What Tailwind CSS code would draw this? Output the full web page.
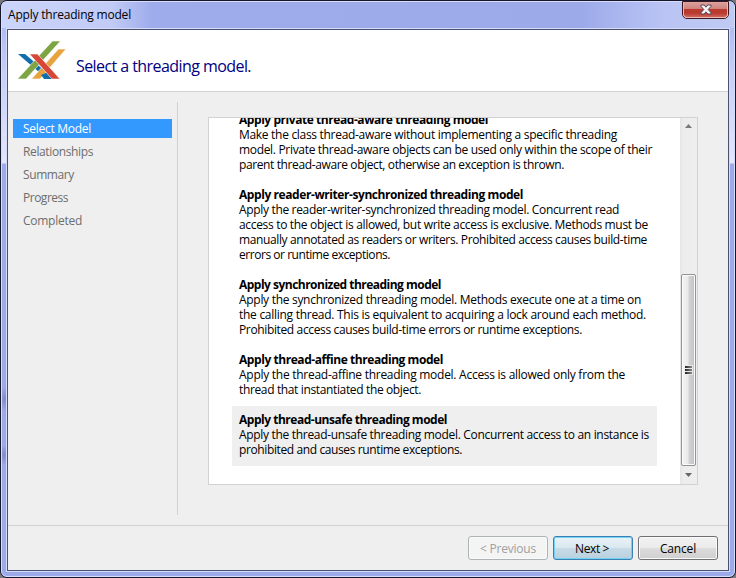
<!DOCTYPE html>
<html lang="en">
<head>
<meta charset="utf-8">
<title>Apply threading model</title>
<script src="https://cdn.jsdelivr.net/npm/@tailwindcss/browser@4"></script>
</head>
<body class="w-[736px] h-[578px] overflow-hidden bg-[#77777c] font-['Open_Sans','Noto_Sans',sans-serif] text-[12px] leading-[15px] text-black">
<div class="w-[736px] h-[578px] rounded-[7px] border border-[#15182c] bg-[#9eacea] overflow-hidden">
<div class="h-full rounded-[6px] border border-[#d8defa] flex flex-col px-[4px] pb-[4px] bg-[radial-gradient(8px_12px_at_3px_397px,#7f8aca,transparent),radial-gradient(6px_10px_at_2px_453px,#7f8aca,transparent),linear-gradient(to_bottom,#a5b2ee_0px,#c5cef7_70px,#e3e6fb_161px,#9daaea_162px,#9daaea_100%)]">
  <header class="h-[26px] shrink-0 -mx-[4px] pl-[6px] pr-[5px] flex justify-between bg-[linear-gradient(to_right,#cbd4fa_0px,#c1cbf6_110px,#9eaceb_150px,#9caaea_580px,#b9c4f4_660px,#bfcaf3_100%)]">
    <div class="pt-[5px]"><span data-w="123" class="fit inline-block whitespace-nowrap">Apply threading model</span></div>
    <div class="w-[47px] h-[18px] -mt-[1px] border border-[#3d1720] rounded-b-[5px] overflow-hidden">
      <div class="h-full border border-t-0 border-[#eab8b5] rounded-b-[4px] bg-[linear-gradient(to_bottom,#dda29f_0%,#cf807a_48%,#b93a2e_50%,#b93b30_75%,#d0655b_100%)] flex items-center justify-center">
        <svg width="12" height="11" viewBox="0 0 12 11"><path d="M1 1h3.200L6 3.200 7.800 1H11v1.300L8.200 5.500 11 8.700V10H7.800L6 7.800 4.200 10H1V8.700L3.800 5.500 1 2.300z" fill="#f6f6f6" stroke="#51495b" stroke-width="1"/></svg>
      </div>
    </div>
  </header>
  <main class="flex-1 min-h-0 border border-[#d5dcfb]">
  <div class="h-full border border-[#4b516f] bg-[#efefef] flex flex-col">
    <div class="h-[62px] shrink-0 bg-white border-b border-[#d2d2d2] flex">
      <svg class="mt-[10px] ml-[9px] shrink-0" width="50" height="40" viewBox="0 0 50 40">
        <path d="M1 14h7l29 25h-7z" fill="#126dab"/>
        <path d="M.5 39h8.500L43.500 1H35.500z" fill="#7da544" stroke="#fff" stroke-width=".6"/>
        <path d="M14.500 39h8.500L49 9h-7.500z" fill="#e7a43e" stroke="#fff" stroke-width=".6"/>
        <path d="M24 35l3 4h8l-6-6z" fill="#126dab"/>
        <path d="M12.500 14H20.500L43 39h-8z" fill="#d64737" stroke="#fff" stroke-width=".6"/>
      </svg>
      <h1 class="ml-[9px] mt-[24px] text-[16px] leading-[24px] text-[#000080]"><span data-w="175" class="fit inline-block whitespace-nowrap">Select a threading model.</span></h1>
    </div>
    <div class="flex-1 min-h-0 flex">
      <nav class="w-[170px] mt-[10px] mb-[10px] pt-[17px] border-r border-[#d2d2d2] pl-[5px] pr-[5px] text-[#6d6d6d] flex flex-col gap-[4px]">
        <div class="h-[19px] pl-[10px] pt-[2px] bg-[#3399ff] text-white"><span data-w="68" class="fit inline-block whitespace-nowrap">Select Model</span></div>
        <div class="h-[19px] pl-[10px] pt-[2px]"><span data-w="70" class="fit inline-block whitespace-nowrap">Relationships</span></div>
        <div class="h-[19px] pl-[10px] pt-[2px]"><span data-w="51" class="fit inline-block whitespace-nowrap">Summary</span></div>
        <div class="h-[19px] pl-[10px] pt-[2px]"><span data-w="45" class="fit inline-block whitespace-nowrap">Progress</span></div>
        <div class="h-[19px] pl-[10px] pt-[2px]"><span data-w="59" class="fit inline-block whitespace-nowrap">Completed</span></div>
      </nav>
      <section class="ml-[30px] mt-[25px] w-[490px] h-[368px] border border-[#d2d2d2] bg-white flex">
        <div class="flex-1 min-w-0 overflow-hidden pl-[23px] pr-[23px]">
          <div class="-mt-[12px] whitespace-nowrap">
            <article class="w-[425px] pl-[7px] pt-[6px] pb-[9px]">
              <div class="h-[15px] font-bold"><span data-w="249" class="fit inline-block">Apply private thread-aware threading model</span></div>
              <div class="h-[15px]"><span data-w="378" class="fit inline-block">Make the class thread-aware without implementing a specific threading</span></div>
              <div class="h-[15px]"><span data-w="413" class="fit inline-block">model. Private thread-aware objects can be used only within the scope of their</span></div>
              <div class="h-[15px]"><span data-w="325" class="fit inline-block">parent thread-aware object, otherwise an exception is thrown.</span></div>
            </article>
            <article class="w-[425px] pl-[7px] pt-[6px] pb-[9px]">
              <div class="h-[15px] font-bold"><span data-w="284" class="fit inline-block">Apply reader-writer-synchronized threading model</span></div>
              <div class="h-[15px]"><span data-w="380" class="fit inline-block">Apply the reader-writer-synchronized threading model. Concurrent read</span></div>
              <div class="h-[15px]"><span data-w="409" class="fit inline-block">access to the object is allowed, but write access is exclusive. Methods must be</span></div>
              <div class="h-[15px]"><span data-w="408" class="fit inline-block">manually annotated as readers or writers. Prohibited access causes build-time</span></div>
              <div class="h-[15px]"><span data-w="151" class="fit inline-block">errors or runtime exceptions.</span></div>
            </article>
            <article class="w-[425px] pl-[7px] pt-[6px] pb-[9px]">
              <div class="h-[15px] font-bold"><span data-w="202" class="fit inline-block">Apply synchronized threading model</span></div>
              <div class="h-[15px]"><span data-w="402" class="fit inline-block">Apply the synchronized threading model. Methods execute one at a time on</span></div>
              <div class="h-[15px]"><span data-w="407" class="fit inline-block">the calling thread. This is equivalent to acquiring a lock around each method.</span></div>
              <div class="h-[15px]"><span data-w="343" class="fit inline-block">Prohibited access causes build-time errors or runtime exceptions.</span></div>
            </article>
            <article class="w-[425px] pl-[7px] pt-[6px] pb-[9px]">
              <div class="h-[15px] font-bold"><span data-w="204" class="fit inline-block">Apply thread-affine threading model</span></div>
              <div class="h-[15px]"><span data-w="386" class="fit inline-block">Apply the thread-affine threading model. Access is allowed only from the</span></div>
              <div class="h-[15px]"><span data-w="182" class="fit inline-block">thread that instantiated the object.</span></div>
            </article>
            <article class="w-[425px] pl-[7px] pt-[6px] pb-[9px] bg-[#efefef]">
              <div class="h-[15px] font-bold"><span data-w="208" class="fit inline-block">Apply thread-unsafe threading model</span></div>
              <div class="h-[15px]"><span data-w="410" class="fit inline-block">Apply the thread-unsafe threading model. Concurrent access to an instance is</span></div>
              <div class="h-[15px]"><span data-w="223" class="fit inline-block">prohibited and causes runtime exceptions.</span></div>
            </article>
          </div>
        </div>
        <div class="w-[17px] shrink-0 px-[1px] bg-[linear-gradient(to_right,#e5e5e5,#ececec_3px,#eeeeee)] flex flex-col items-center">
          <svg class="mt-[6px]" width="7" height="4" viewBox="0 0 7 4"><path d="M0 4L3.500 0 7 4z" fill="#7a7a7a"/></svg>
          <div class="mt-[146px] w-[15px] h-[192px] shrink-0 rounded-[2px] border border-[#939393] shadow-[inset_0_0_0_1px_#fafafa] bg-[linear-gradient(to_right,#f5f5f5,#e9e9eb_48%,#d4d4d6_52%,#c1c1c5_100%)] flex flex-col items-center justify-center">
            <div class="w-[9px] h-[10px] bg-[#ededed]/80 pl-[1px] pt-[1px] flex flex-col gap-[1px]">
              <div class="w-[7px] h-[2px] bg-[linear-gradient(to_right,#222,#888)]"></div>
              <div class="w-[7px] h-[2px] bg-[linear-gradient(to_right,#222,#888)]"></div>
              <div class="w-[7px] h-[2px] bg-[linear-gradient(to_right,#222,#888)]"></div>
            </div>
          </div>
          <svg class="mt-[7px]" width="7" height="4" viewBox="0 0 7 4"><path d="M0 0h7L3.500 4z" fill="#666"/></svg>
        </div>
      </section>
    </div>
    <footer class="h-[45px] shrink-0 border-t border-[#d2d2d2] pt-[10px] pr-[10px] flex justify-end gap-[5px]">
      <div class="w-[80px] h-[24px] rounded-[3px] border border-[#adb2b5] bg-[#f4f4f4] shadow-[inset_0_0_0_1px_#fafafa] text-[#a0a0a0] flex items-center justify-center"><span data-w="56" class="fit inline-block whitespace-nowrap">&lt; Previous</span></div>
      <div class="w-[80px] h-[24px] rounded-[3px] border border-[#3c7fb1] bg-[linear-gradient(to_bottom,#eaf3f8_0%,#d9e8ef_48%,#c8dce7_50%,#b9d0dd_100%)] shadow-[inset_0_0_0_1px_#73d2f7] flex items-center justify-center"><span data-w="34" class="fit inline-block whitespace-nowrap mr-[2px]">Next &gt;</span></div>
      <div class="w-[80px] h-[24px] rounded-[3px] border border-[#707070] bg-[linear-gradient(to_bottom,#f2f2f2_0%,#ebebeb_48%,#dddddd_50%,#cfcfcf_100%)] shadow-[inset_0_0_0_1px_#fafafa] flex items-center justify-center"><span data-w="36" class="fit inline-block whitespace-nowrap">Cancel</span></div>
    </footer>
  </div>
  </main>
</div>
</div>
<script>
// Tracks each line so that it spans its nominal width, once styles are ready.
function fitLines() {
  document.querySelectorAll('.fit').forEach(function (el) {
    el.style.letterSpacing = '0px';
    var extra = Number(el.dataset.w) - el.getBoundingClientRect().width;
    el.style.letterSpacing = (extra / el.textContent.length) + 'px';
  });
}
window.addEventListener('load', function () {
  fitLines();
  requestAnimationFrame(fitLines);
  document.fonts.ready.then(fitLines);
});
</script>
</body>
</html>
